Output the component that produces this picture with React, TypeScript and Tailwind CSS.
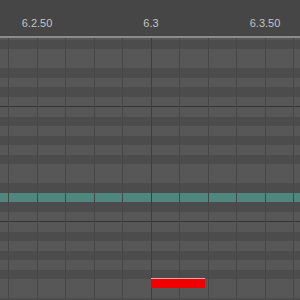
const OCTAVE = [false, true, false, true, false, true, false, false, true, false, true, false];

function Octave({ highlight }: { highlight?: number }) {
  return (
    <div className="h-[115px] flex flex-col border-b border-[#333333] shrink-0">
      {OCTAVE.map((black, i) => (
        <div
          key={i}
          className={
            "flex-1 " +
            (i === highlight ? "bg-[#4f877e]" : black ? "bg-[#4c4c4c]" : "bg-[#575757]")
          }
        />
      ))}
    </div>
  );
}

export default function App() {
  const cols = Array.from({ length: 11 });

  return (
    <div className="w-[300px] h-[300px] bg-[#464646] flex flex-col overflow-hidden font-['Liberation_Sans',sans-serif]">
      <div className="h-[36px] shrink-0 flex items-end pb-[5px] ml-[-20px] text-[11px] text-[#c4c4c4]">
        <div className="w-[114px] shrink-0 text-center">6.2.50</div>
        <div className="w-[114px] shrink-0 text-center">6.3</div>
        <div className="w-[114px] shrink-0 text-center">6.3.50</div>
      </div>
      <div className="h-[2px] bg-[#8c8c8c] shrink-0" />
      <div className="relative flex-1 overflow-hidden">
        <div className="flex flex-col mt-[-46px]">
          <Octave />
          <Octave highlight={9} />
          <Octave />
        </div>
        <div className="absolute inset-0 flex pl-[8px]">
          {cols.map((_, i) => (
            <div
              key={i}
              className={
                "w-[28.5px] shrink-0 border-l " +
                (i === 5 ? "border-[#3e3e3e]" : "border-[#474747]")
              }
            />
          ))}
        </div>
        <div className="absolute left-[151px] top-[240px] w-[54px] h-[10px] bg-[#f00000] border-t border-[#e0a8a8]" />
      </div>
    </div>
  );
}
